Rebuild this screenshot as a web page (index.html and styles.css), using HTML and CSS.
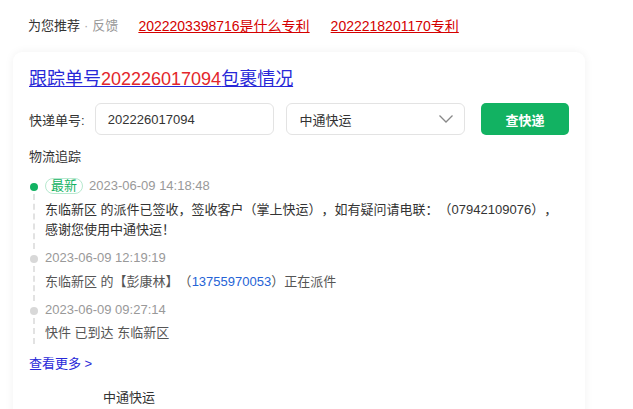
FILE: index.html
```html
<!DOCTYPE html>
<html lang="zh">
<head>
<meta charset="utf-8">
<link rel="stylesheet" href="styles.css">
</head>
<body>
<div class="top">
  <span class="rec">为您推荐</span><span class="dot-sep">·</span><span class="fb">反馈</span>
  <a class="rlink" href="#">2022203398716是什么专利</a>
  <a class="rlink" href="#">2022218201170专利</a>
</div>
<div class="card">
  <a class="title" href="#">跟踪单号<span class="red">202226017094</span>包裹情况</a>
  <div class="form">
    <span class="label">快递单号:</span>
    <div class="input">202226017094</div>
    <div class="select"><span>中通快运</span>
      <svg width="16" height="10" viewBox="0 0 16 10"><path d="M1.5 1.5 L8 8 L14.5 1.5" fill="none" stroke="#888" stroke-width="1.3"/></svg>
    </div>
    <button class="btn">查快递</button>
  </div>
  <div class="sub">物流追踪</div>
  <div class="timeline">
    <div class="item first">
      <div class="rail"><span class="node green"></span><span class="line"></span></div>
      <div class="body">
        <div class="time"><span class="tag">最新</span>2023-06-09 14:18:48</div>
        <div class="desc">东临新区 的派件已签收，签收客户（掌上快运），如有疑问请电联：（07942109076），感谢您使用中通快运！</div>
      </div>
    </div>
    <div class="item">
      <div class="rail"><span class="node"></span><span class="line"></span></div>
      <div class="body">
        <div class="time">2023-06-09 12:19:19</div>
        <div class="desc gray">东临新区 的【彭康林】（<span class="blue">13755970053</span>）正在派件</div>
      </div>
    </div>
    <div class="item">
      <div class="rail"><span class="node"></span><span class="line short"></span></div>
      <div class="body">
        <div class="time">2023-06-09 09:27:14</div>
        <div class="desc gray last">快件 已到达 东临新区</div>
      </div>
    </div>
  </div>
  <a class="more" href="#">查看更多 &gt;</a>
  <div class="company">中通快运</div>
</div>
</body>
</html>
```
FILE: styles.css
```css
* { box-sizing: border-box; }
html, body { margin: 0; padding: 0; background: #fff; }
body {
  font-family: "Liberation Sans", "Noto Sans CJK SC", sans-serif;
  font-size: 13px;
  color: #333;
  overflow: hidden;
  height: 409px;
  text-spacing-trim: space-all;
}
.top {
  display: flex;
  align-items: center;
  padding: 14px 0 0 28px;
  height: 38px;
  line-height: 18px;
}
.rec { color: #333; }
.dot-sep { color: #aaa; margin: 0 4px; }
.fb { color: #999; }
.rlink {
  color: #d40000;
  text-decoration: underline;
  font-size: 14px;
  margin-left: 21px;
}
.rlink:first-of-type { margin-left: 20px; }
.card {
  margin: 14px 0 0 13px;
  width: 572px;
  height: 400px;
  border-radius: 9px;
  background: #fff;
  box-shadow: 0 0 10px rgba(0,0,0,0.06);
  padding: 14px 16px 0 16px;
}
.title {
  display: inline-block;
  font-size: 18px;
  line-height: 26px;
  color: #2828d8;
  text-decoration: underline;
}
.title .red { color: #e3262b; }
.form {
  display: flex;
  align-items: center;
  margin-top: 11px;
  height: 32px;
}
.label { font-size: 13px; color: #333; width: 66px; }
.input, .select {
  height: 32px;
  border: 1px solid #e3e3e3;
  border-radius: 6px;
  display: flex;
  align-items: center;
  font-size: 13px;
  color: #333;
}
.input { width: 179px; padding-left: 12px; }
.select {
  width: 180px;
  margin-left: 12px;
  padding: 0 10px 0 13px;
  justify-content: space-between;
}
.btn {
  margin-left: 16px;
  width: 88px;
  height: 32px;
  border: 0;
  border-radius: 5px;
  background: #12b262;
  color: #fff;
  font-family: inherit;
  font-size: 13px;
  font-weight: 600;
}
.sub { margin-top: 13px; line-height: 18px; }
.timeline { margin-top: 11px; }
.item { display: flex; }
.rail {
  width: 16px;
  display: flex;
  flex-direction: column;
  align-items: center;
  padding-top: 6px;
  margin-left: -3px;
}
.node {
  width: 8px; height: 8px; border-radius: 50%;
  background: #d8d8d8;
  flex: none;
}
.node.green { background: #12b262; }
.line {
  flex: 1;
  border-left: 2px dashed #e2e2e2;
  margin-top: 3px;
}
.line.short { flex: none; height: 26px; }
.body { padding-left: 3px; }
.time {
  color: #999;
  line-height: 18px;
  display: flex;
  align-items: center;
}
.tag {
  display: inline-block;
  border: 1px solid #b7e9cf;
  border-radius: 9px;
  color: #12b262;
  font-size: 13px;
  line-height: 14px;
  padding: 0 5px;
  margin-right: 6px;
}
.desc {
  margin-top: 5px;
  line-height: 20px;
  color: #333;
  padding-bottom: 9px;
  max-width: 514px;
}
.desc.last { margin-top: 4px; }
.desc.gray { color: #555; }
.blue { color: #2563d6; }
.more {
  display: inline-block;
  margin-top: 3px;
  color: #2828d8;
  text-decoration: none;
  line-height: 18px;
}
.company { margin: 16px 0 0 74px; line-height: 18px; }
```
